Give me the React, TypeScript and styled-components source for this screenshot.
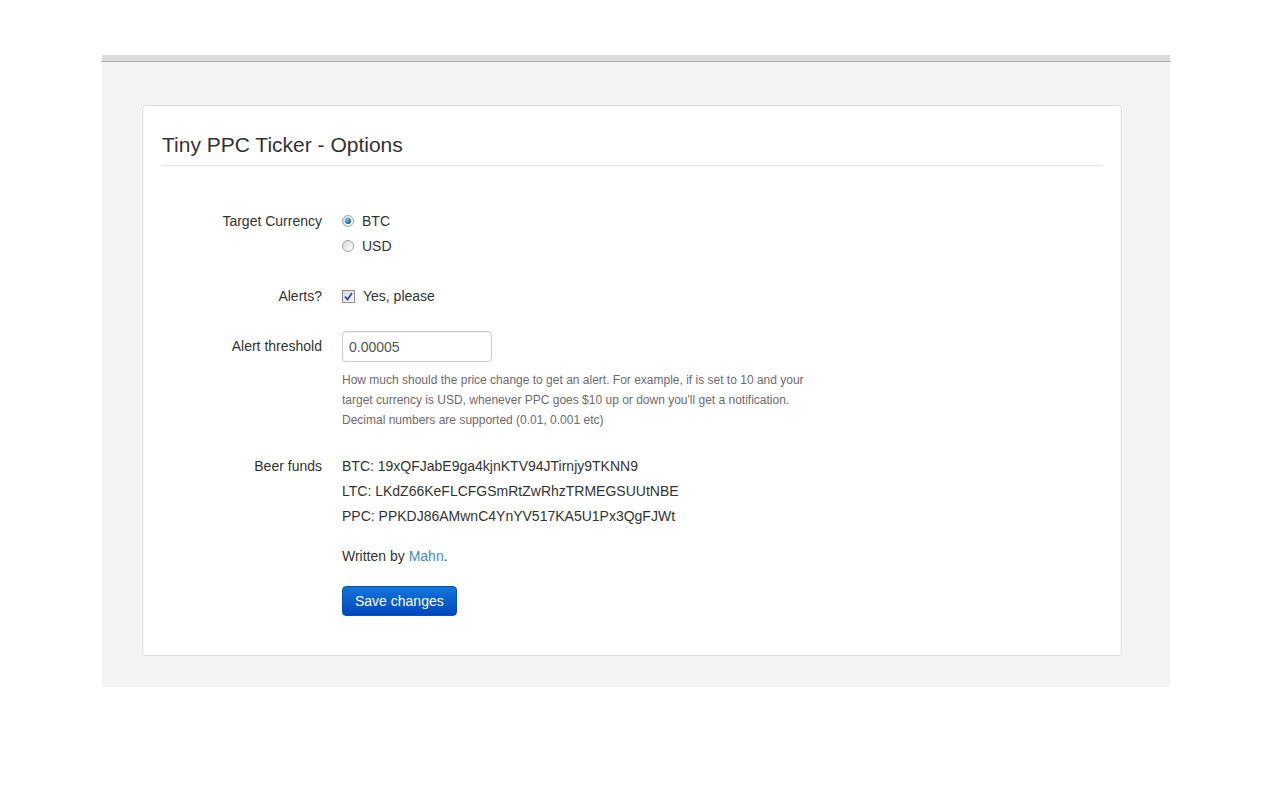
import React from 'react';
import styled, { createGlobalStyle } from 'styled-components';

// ______________________________________________________
//
// @ Global
const GlobalStyle = createGlobalStyle`
  html, body {
    margin: 0;
    padding: 0;
    background: #fff;
  }
  body {
    font-family: "Liberation Sans", Arial, sans-serif;
    font-size: 14px;
    line-height: 20px;
    color: #333;
  }
`;

// ______________________________________________________
//
// @ Layout
const Page = styled.div`
  padding-top: 55px;
  padding-left: 102px;
`;

const Frame = styled.div`
  width: 1068px;
  background: #f4f4f4;
  border-top: 6px solid #dcdcdc;
  box-shadow: inset 0 1px 0 #a9a9a9;
  padding: 44px 48px 31px 40px;
  box-sizing: border-box;
`;

const Card = styled.div`
  background: #fff;
  border: 1px solid #ddd;
  border-radius: 4px;
  padding: 27px 19px 39px 19px;
`;

const Title = styled.h3`
  margin: 0 0 45px;
  padding-bottom: 9px;
  border-bottom: 1px solid #e5e5e5;
  font-size: 21px;
  font-weight: 400;
  line-height: 23px;
  color: #333;
`;

const FormRow = styled.div<{ $gap: number }>`
  display: grid;
  grid-template-columns: 160px 1fr;
  column-gap: 20px;
  margin-bottom: ${p => p.$gap}px;
  &:last-child {
    margin-bottom: 0;
  }
`;

const Label = styled.div<{ $tall?: boolean }>`
  text-align: right;
  line-height: 20px;
  padding-top: ${p => (p.$tall ? 5 : 0)}px;
`;

const Controls = styled.div``;

const Line = styled.div`
  display: flex;
  align-items: center;
  height: 20px;
  & + & {
    margin-top: 5px;
  }
`;

const OptionText = styled.span`
  margin-left: 8px;
`;

// ______________________________________________________
//
// @ Inputs
const Radio = styled.span<{ $checked?: boolean }>`
  position: relative;
  width: 12px;
  height: 12px;
  border-radius: 50%;
  box-sizing: border-box;
  border: 1px solid #a4a4a4;
  background: linear-gradient(135deg, #d6d6d6, #f6f6f6 70%, #fff);
  &::after {
    content: '';
    display: ${p => (p.$checked ? 'block' : 'none')};
    position: absolute;
    left: 2px;
    top: 2px;
    width: 6px;
    height: 6px;
    border-radius: 50%;
    background: radial-gradient(circle at 35% 35%, #7cc3ef, #1d6aa5 60%, #12446e);
  }
`;

const Check = styled.span`
  display: flex;
  align-items: center;
  justify-content: center;
  width: 13px;
  height: 13px;
  box-sizing: border-box;
  border: 1px solid #8e8f8f;
  background: linear-gradient(135deg, #dcdcdc, #f8f8f8);
`;

const TextInput = styled.input`
  display: block;
  width: 150px;
  height: 31px;
  box-sizing: border-box;
  padding: 5px 6px;
  border: 1px solid #ccc;
  border-radius: 4px;
  font-family: inherit;
  font-size: 14px;
  color: #555;
  outline: none;
  box-shadow: inset 0 1px 1px rgba(0, 0, 0, 0.06);
`;

const Help = styled.p`
  margin: 8px 0 0;
  font-size: 12px;
  line-height: 20px;
  color: #6e6a70;
  max-width: 480px;
`;

const Link = styled.a`
  color: #428bca;
  text-decoration: none;
`;

const SaveButton = styled.button`
  height: 30px;
  padding: 0 12px;
  border: 1px solid #0a4fb5;
  border-radius: 4px;
  background: linear-gradient(#1276dc, #0046be);
  color: #fff;
  font-family: inherit;
  font-size: 14px;
  cursor: pointer;
`;

// ______________________________________________________
//
// @ Component
const funds = [
  'BTC: 19xQFJabE9ga4kjnKTV94JTirnjy9TKNN9',
  'LTC: LKdZ66KeFLCFGSmRtZwRhzTRMEGSUUtNBE',
  'PPC: PPKDJ86AMwnC4YnYV517KA5U1Px3QgFJWt',
];

const App: React.FC = () => (
  <>
    <GlobalStyle />
    <Page>
      <Frame>
        <Card>
          <Title>Tiny PPC Ticker - Options</Title>

          <FormRow $gap={30}>
            <Label>Target Currency</Label>
            <Controls>
              <Line>
                <Radio $checked />
                <OptionText>BTC</OptionText>
              </Line>
              <Line>
                <Radio />
                <OptionText>USD</OptionText>
              </Line>
            </Controls>
          </FormRow>

          <FormRow $gap={25}>
            <Label>Alerts?</Label>
            <Controls>
              <Line>
                <Check>
                  <svg width="9" height="9" viewBox="0 0 9 9">
                    <path d="M1 4.5 L3.5 7.5 L8 1" fill="none" stroke="#2a4ea6" strokeWidth="1.8" />
                  </svg>
                </Check>
                <OptionText>Yes, please</OptionText>
              </Line>
            </Controls>
          </FormRow>

          <FormRow $gap={26}>
            <Label $tall>Alert threshold</Label>
            <Controls>
              <TextInput defaultValue="0.00005" />
              <Help>
                How much should the price change to get an alert. For example, if is set to 10 and your
                target currency is USD, whenever PPC goes $10 up or down you'll get a notification.
                Decimal numbers are supported (0.01, 0.001 etc)
              </Help>
            </Controls>
          </FormRow>

          <FormRow $gap={20}>
            <Label>Beer funds</Label>
            <Controls>
              {funds.map(f => (
                <Line key={f}>{f}</Line>
              ))}
            </Controls>
          </FormRow>

          <FormRow $gap={20}>
            <Label />
            <Controls>
              <Line>
                <span>
                  Written by <Link href="#">Mahn</Link>.
                </span>
              </Line>
            </Controls>
          </FormRow>

          <FormRow $gap={0}>
            <Label />
            <Controls>
              <SaveButton>Save changes</SaveButton>
            </Controls>
          </FormRow>
        </Card>
      </Frame>
    </Page>
  </>
);

export default App;
